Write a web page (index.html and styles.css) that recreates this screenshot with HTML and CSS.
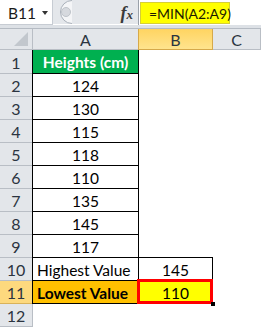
FILE: index.html
```html
<!DOCTYPE html>
<html lang="en">

<head>
  <meta charset="UTF-8" />
  <meta name="viewport" content="width=device-width, initial-scale=1.0" />
  <title>MIN function</title>
  <link rel="stylesheet" href="styles.css">
</head>

<body>
  <div class="excel">
    <div class="formula-bar">
      <div class="name-box">
        <span>B11</span>
        <span class="caret"></span>
      </div>
      <div class="grip">
        <svg width="16" height="24" viewBox="0 0 16 24">
          <path d="M16 0.5 A11.5 11.5 0 0 0 16 23.5" fill="#f4f5f7" stroke="#a9b0b9" />
          <circle cx="10" cy="12" r="4.5" fill="#d6d9de" stroke="#bfc4ca" />
        </svg>
      </div>
      <div class="fx">f<span>x</span></div>
      <div class="formula-input">
        <span class="formula">=MIN(A2:A9)</span>
      </div>
    </div>

    <div class="sheet">
      <div class="corner"><span class="tri"></span></div>
      <div class="col-head">A</div>
      <div class="col-head sel">B</div>
      <div class="col-head">C</div>

      <div class="row-head">1</div>
      <div class="cell a title">Heights (cm)</div>
      <div class="cell"></div>
      <div class="cell"></div>

      <div class="row-head">2</div>
      <div class="cell a">124</div>
      <div class="cell"></div>
      <div class="cell"></div>

      <div class="row-head">3</div>
      <div class="cell a">130</div>
      <div class="cell"></div>
      <div class="cell"></div>

      <div class="row-head">4</div>
      <div class="cell a">115</div>
      <div class="cell"></div>
      <div class="cell"></div>

      <div class="row-head">5</div>
      <div class="cell a">118</div>
      <div class="cell"></div>
      <div class="cell"></div>

      <div class="row-head">6</div>
      <div class="cell a">110</div>
      <div class="cell"></div>
      <div class="cell"></div>

      <div class="row-head">7</div>
      <div class="cell a">135</div>
      <div class="cell"></div>
      <div class="cell"></div>

      <div class="row-head">8</div>
      <div class="cell a">145</div>
      <div class="cell"></div>
      <div class="cell"></div>

      <div class="row-head">9</div>
      <div class="cell a">117</div>
      <div class="cell b-under"></div>
      <div class="cell"></div>

      <div class="row-head">10</div>
      <div class="cell a label">Highest Value</div>
      <div class="cell b">145</div>
      <div class="cell"></div>

      <div class="row-head sel">11</div>
      <div class="cell a label lowest">Lowest Value</div>
      <div class="cell b result">110</div>
      <div class="cell"></div>

      <div class="row-head">12</div>
      <div class="cell"></div>
      <div class="cell"></div>
      <div class="cell"></div>
    </div>
  </div>
</body>

</html>
```

FILE: styles.css
```css
* {
  margin: 0;
  padding: 0;
  box-sizing: border-box;
}

body {
  width: 261px;
  height: 328px;
  overflow: hidden;
  background: #fff;
  font-family: Lato, "Open Sans", sans-serif;
  font-size: 15.5px;
  color: #000;
}

.excel {
  width: 261px;
}

/* formula bar */
.formula-bar {
  height: 29px;
  display: flex;
  align-items: flex-start;
  background: #e4e7eb;
  border-bottom: 1px solid #b5bbc3;
  box-shadow: inset 0 -3px 0 #dde1e6, inset 0 -4px 0 #fff;
}

.name-box {
  width: 53px;
  height: 25px;
  padding: 1px 0 0 8px;
  display: flex;
  align-items: center;
  justify-content: space-between;
  background: #fff;
  border-right: 1px solid #c7ccd3;
  border-bottom: 1px solid #c7ccd3;
  color: #1a1a1a;
  font-size: 15.5px;
}

.caret {
  width: 0;
  height: 0;
  margin-right: 4px;
  border-left: 3.5px solid transparent;
  border-right: 3.5px solid transparent;
  border-top: 4px solid #333;
}

.grip {
  width: 16px;
  height: 25px;
  margin-left: 3px;
}

.fx {
  width: 67px;
  height: 25px;
  padding: 3px 5px 0 0;
  text-align: right;
  font-family: "Liberation Serif", serif;
  font-style: italic;
  font-weight: bold;
  font-size: 18px;
  color: #3a3a3a;
  border-right: 1px solid #9aa1aa;
}

.fx span {
  font-size: 13px;
}

.formula-input {
  flex: 1;
  height: 25px;
  padding: 2px 0 0 1px;
  background: #fff;
}

.formula {
  display: inline-block;
  width: 90px;
  height: 22px;
  line-height: 21px;
  padding-left: 8px;
  background: #ffff00;
  border: 1px solid #d6cf36;
  font-size: 14px;
  white-space: nowrap;
  color: #1b1b00;
}

/* grid */
.sheet {
  display: grid;
  grid-template-columns: 33px 106px 74px 48px;
  grid-template-rows: 21px 24px repeat(11, 23px);
}

.corner,
.col-head,
.row-head {
  background: #e3e6ea;
  border-right: 1px solid #b9bec5;
  border-bottom: 1px solid #b9bec5;
  color: #2b3440;
  display: flex;
  align-items: center;
  justify-content: center;
}

.corner {
  position: relative;
}

.tri {
  position: absolute;
  right: 4px;
  bottom: 3px;
  width: 0;
  height: 0;
  border-left: 14px solid transparent;
  border-bottom: 14px solid #c2c7cd;
}

.col-head {
  padding-top: 1px;
  font-size: 16px;
}

.col-head.sel {
  background: linear-gradient(#ffd461, #ffe48e);
  border-color: #d6a94a;
  border-left: 1px solid #d6a94a;
  margin-left: -1px;
}

.row-head {
  font-size: 16px;
  padding-top: 1px;
}

.row-head.sel {
  background: #fdd97e;
  border-color: #d9b25a;
}

.cell {
  display: flex;
  align-items: center;
  justify-content: center;
  padding-top: 1px;
}

.cell.a {
  border-left: 1px solid #000;
  border-right: 1px solid #000;
  border-bottom: 1px solid #000;
  margin-left: -1px;
  width: 107px;
}

.title {
  background: #00b050;
  color: #fff;
  font-weight: bold;
}

.label {
  justify-content: flex-start;
  padding-left: 4px;
}

.lowest {
  background: #ffc000;
  font-weight: bold;
}

.b-under {
  border-bottom: 1px solid #000;
}

.cell.b {
  border-right: 1px solid #000;
  border-bottom: 1px solid #000;
}

.result {
  position: relative;
  background: #ffff00;
}

.result::after {
  content: "";
  position: absolute;
  top: -2px;
  left: -2px;
  right: -1px;
  bottom: -1px;
  border: 3px solid #ff0000;
}

.result::before {
  content: "";
  position: absolute;
  right: -3px;
  bottom: -3px;
  width: 4px;
  height: 4px;
  background: #000;
  z-index: 1;
}
```
